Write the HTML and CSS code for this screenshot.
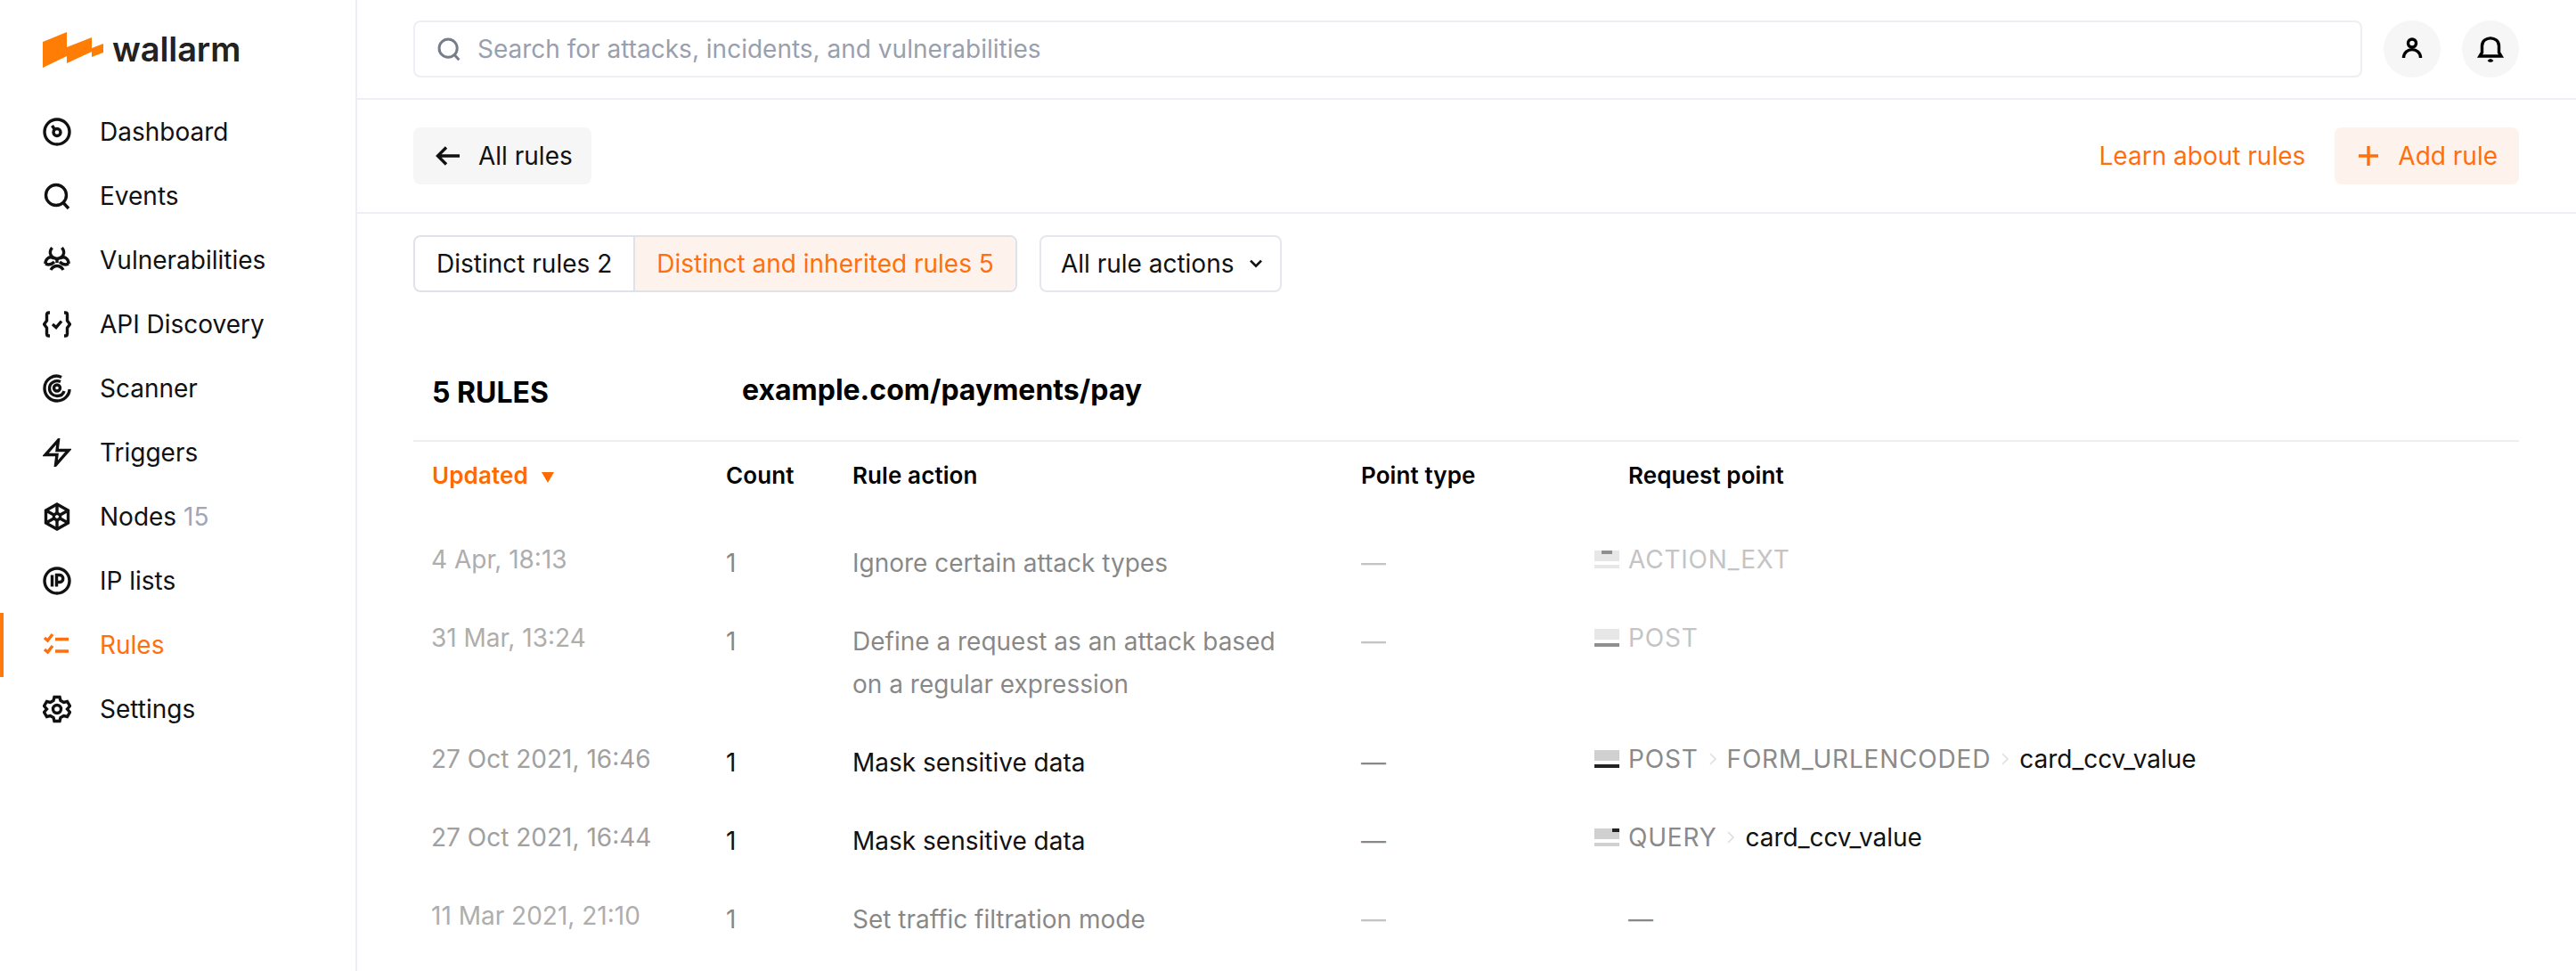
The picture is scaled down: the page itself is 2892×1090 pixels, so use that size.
FILE: index.html
```html
<!DOCTYPE html>
<html>
<head>
	<meta charset="utf-8">
	<title>Rules</title>
	<link rel="stylesheet" href="styles.css">
</head>
<body>
<div class="app">
	<aside class="sidebar">
		<div class="logo">
			<svg class="logo-mark" width="68" height="40" viewBox="0 0 68 40"><polygon fill="#ff7d05" points="0,11 27,0 27,17 55,6 55,18 68,13 68,23 55,28 55,22 27,35 27,27 0,40"/></svg>
			<span class="logo-text">wallarm</span>
		</div>
		<nav class="nav">
			<a class="nav-item">
				<svg class="ico" viewBox="0 0 32 32"><circle cx="16" cy="16" r="14"/><circle cx="16" cy="16.500" r="4"/><path d="M13.500 13.500 10.500 9"/></svg>
				<span>Dashboard</span>
			</a>
			<a class="nav-item">
				<svg class="ico" viewBox="0 0 32 32"><circle cx="15" cy="15" r="11.500"/><path d="M23 23.500 29 30"/></svg>
				<span>Events</span>
			</a>
			<a class="nav-item">
				<svg class="ico" viewBox="0 0 32 32"><path d="M10.500 2C6 8 9 13 16 14.500 23 13 26 8 21.500 2"/><path d="M3 20C3 14 8 11 12.500 14M3 20C7 22 10 21 13 18"/><path d="M29 20C29 14 24 11 19.500 14M29 20C25 22 22 21 19 18"/><path d="M9 27C11 23.500 14 22.500 16 22.500 18 22.500 21 23.500 23 27"/><path d="M16 14.500V19"/></svg>
				<span>Vulnerabilities</span>
			</a>
			<a class="nav-item">
				<svg class="ico" viewBox="0 0 32 32"><path d="M8 3H6.500C5 3 4.500 4 4.500 5.500V12L1.500 16 4.500 20V26.500C4.500 28 5 29 6.500 29H8"/><path d="M24 3H25.500C27 3 27.500 4 27.500 5.500V12L30.500 16 27.500 20V26.500C27.500 28 27 29 25.500 29H24"/><path d="M11 16 15 19.500 21 12.500"/></svg>
				<span>API Discovery</span>
			</a>
			<a class="nav-item">
				<svg class="ico" viewBox="0 0 32 32"><path d="M21 3.500C13 -0.500 2 5 2 16 2 24 8.500 30 16 30 23.500 30 30 24 30 17"/><path d="M20 8.500C14.500 6 7.500 9.500 7.500 16 7.500 21 11.500 24.500 16 24.500 20 24.500 23 22.500 24 19"/><circle cx="16" cy="15.500" r="3.500"/></svg>
				<span>Scanner</span>
			</a>
			<a class="nav-item">
				<svg class="ico" viewBox="0 0 32 32"><path d="M17.500 2 3 18.500H16L14.500 30 29 13.500H16Z"/></svg>
				<span>Triggers</span>
			</a>
			<a class="nav-item">
				<svg class="ico" viewBox="0 0 32 32"><path d="M16 2 28.500 9V23L16 30 3.500 23V9Z"/><path d="M16 2V12M16 20V30M3.500 9 12.500 14M28.500 9 19.500 14M3.500 23 12.500 18M28.500 23 19.500 18"/><path d="M16 12 19.500 14V18L16 20 12.500 18V14Z"/></svg>
				<span>Nodes <span class="nav-count">15</span></span>
			</a>
			<a class="nav-item">
				<svg class="ico" viewBox="0 0 32 32"><circle cx="16" cy="16" r="14"/><path d="M10.500 9.500V22.500"/><path d="M15.500 22.500V9.500H19C24 9.500 24 17.500 19 17.500H15.500"/></svg>
				<span>IP lists</span>
			</a>
			<a class="nav-item nav-active">
				<svg class="ico" viewBox="0 0 32 32"><path d="M2 8 5.500 11 11 4M2 21 5.500 24 11 17"/><path d="M14 9.500H29M14 23H29"/></svg>
				<span>Rules</span>
			</a>
			<a class="nav-item">
				<svg class="ico" viewBox="0 0 32 32"><path d="M13 2.500H19L20 6.500 23.500 8.500 27.500 7.500 30.500 12.500 27.500 16 30.500 19.500 27.500 24.500 23.500 23.500 20 25.500 19 29.500H13L12 25.500 8.500 23.500 4.500 24.500 1.500 19.500 4.500 16 1.500 12.500 4.500 7.500 8.500 8.500 12 6.500Z"/><circle cx="16" cy="16" r="4.500"/></svg>
				<span>Settings</span>
			</a>
		</nav>
	</aside>

	<main class="main">
		<header class="topbar">
			<div class="search">
				<svg class="search-ico" viewBox="0 0 32 32"><circle cx="15" cy="15" r="11.500"/><path d="M23 23.500 29 30"/></svg>
				<span>Search for attacks, incidents, and vulnerabilities</span>
			</div>
			<button class="round">
				<svg viewBox="0 0 32 32"><circle cx="16" cy="9.500" r="4.500"/><path d="M6.500 26C6.500 13.500 25.500 13.500 25.500 26"/></svg>
			</button>
			<button class="round">
				<svg viewBox="0 0 32 32"><path d="M4 24H28L25.500 20V12.500C25.500 1 6.500 1 6.500 12.500V20Z"/><path d="M14 28C15 29.500 17 29.500 18 28"/></svg>
			</button>
		</header>

		<div class="toolbar">
			<button class="btn btn-grey">
				<svg viewBox="0 0 32 32"><path d="M28 16H4M13 6.500 3.500 16 13 25.500"/></svg>
				All rules
			</button>
			<div class="toolbar-right">
				<a class="link">Learn about rules</a>
				<button class="btn btn-orange">
					<svg viewBox="0 0 32 32"><path d="M16 5V27M5 16H27"/></svg>
					Add rule
				</button>
			</div>
		</div>

		<div class="filters">
			<div class="tabs">
				<div class="tab">Distinct rules 2</div>
				<div class="tab tab-on">Distinct and inherited rules 5</div>
			</div>
			<div class="select">
				All rule actions
				<svg viewBox="0 0 12 12"><path d="M1.500 3.500 6 8 10.500 3.500"/></svg>
			</div>
		</div>

		<section class="rules">
			<div class="rules-head">
				<div class="rules-count">5 RULES</div>
				<div class="rules-path">example.com/payments/pay</div>
			</div>
			<div class="row row-head">
				<div class="th-sort">Updated <i class="sort-arrow"></i></div>
				<div>Count</div>
				<div>Rule action</div>
				<div>Point type</div>
				<div class="th-point">Request point</div>
			</div>

			<div class="row row-dim">
				<div class="date">4 Apr, 18:13</div>
				<div>1</div>
				<div>Ignore certain attack types</div>
				<div class="dash">—</div>
				<div class="point">
					<span class="pt pt-ext"><b></b></span>
					<span class="seg">ACTION_EXT</span>
				</div>
			</div>
			<div class="row row-dim">
				<div class="date">31 Mar, 13:24</div>
				<div>1</div>
				<div class="action-wrap">Define a request as an attack based on a regular expression</div>
				<div class="dash">—</div>
				<div class="point">
					<span class="pt pt-post"><b></b></span>
					<span class="seg">POST</span>
				</div>
			</div>
			<div class="row">
				<div class="date">27 Oct 2021, 16:46</div>
				<div>1</div>
				<div>Mask sensitive data</div>
				<div class="dash">—</div>
				<div class="point">
					<span class="pt pt-post"><b></b></span>
					<span class="seg">POST</span>
					<svg class="chev" viewBox="0 0 12 16"><path d="M3 2 9 8 3 14"/></svg>
					<span class="seg">FORM_URLENCODED</span>
					<svg class="chev" viewBox="0 0 12 16"><path d="M3 2 9 8 3 14"/></svg>
					<span>card_ccv_value</span>
				</div>
			</div>
			<div class="row">
				<div class="date">27 Oct 2021, 16:44</div>
				<div>1</div>
				<div>Mask sensitive data</div>
				<div class="dash">—</div>
				<div class="point">
					<span class="pt pt-query"><b></b></span>
					<span class="seg">QUERY</span>
					<svg class="chev" viewBox="0 0 12 16"><path d="M3 2 9 8 3 14"/></svg>
					<span>card_ccv_value</span>
				</div>
			</div>
			<div class="row row-dim">
				<div class="date">11 Mar 2021, 21:10</div>
				<div>1</div>
				<div>Set traffic filtration mode</div>
				<div class="dash">—</div>
				<div class="point-empty">—</div>
			</div>
		</section>
	</main>
</div>
</body>
</html>
```

FILE: styles.css
```css
html, body {
	margin: 0;
	height: 100%;
	overflow: hidden;
}
body {
	background: #fff;
	font-family: Inter, 'Liberation Sans', sans-serif;
	font-size: 28px;
	line-height: 48px;
	color: #111;
}
svg {
	fill: none;
	stroke: currentColor;
	stroke-width: 3.4;
}
button {
	font: inherit;
	border: 0;
	cursor: pointer;
}
.app {
	display: flex;
	height: 1090px;
}

/* sidebar */
.sidebar {
	width: 399px;
	flex: none;
	border-right: 2px solid #eeeef4;
}
.logo {
	display: flex;
	align-items: center;
	height: 112px;
	padding-left: 48px;
	gap: 10px;
}
.logo-mark {
	stroke: none;
}
.logo-text {
	font-weight: 600;
	font-size: 38px;
	letter-spacing: -0.1px;
	color: #222;
	line-height: 40px;
	padding-bottom: 2px;
}
.nav-item {
	display: flex;
	align-items: center;
	height: 72px;
	padding-left: 48px;
	gap: 32px;
	color: #111;
}
.ico {
	width: 32px;
	height: 32px;
	flex: none;
}
.nav-count {
	color: #a0a6b4;
}
.nav-active {
	color: #ff6f0d;
	box-shadow: inset 4px 0 0 #ff7a0a;
}

/* header bars */
.main {
	flex: 1;
	min-width: 0;
}
.topbar {
	display: flex;
	align-items: center;
	height: 110px;
	padding: 0 64px 0 63px;
	border-bottom: 2px solid #eeeef4;
}
.search {
	flex: 1;
	display: flex;
	align-items: center;
	gap: 18px;
	height: 60px;
	padding-left: 24px;
	border: 2px solid #eeeef4;
	border-radius: 8px;
	color: #9a9fae;
	margin-right: 24px;
}
.search-ico {
	width: 28px;
	height: 28px;
	color: #777c88;
}
.round {
	width: 64px;
	height: 64px;
	border-radius: 50%;
	background: #f6f6f6;
	padding: 16px;
	display: flex;
	color: #000;
}
.round + .round {
	margin-left: 24px;
}
.round svg {
	width: 32px;
	height: 32px;
}
.toolbar {
	display: flex;
	align-items: center;
	justify-content: space-between;
	height: 126px;
	padding: 0 64px 0 63px;
	border-bottom: 2px solid #eeeef4;
}
.toolbar-right {
	display: flex;
	align-items: center;
	gap: 33px;
}
.btn {
	display: flex;
	align-items: center;
	height: 64px;
	border-radius: 8px;
	gap: 17px;
}
.btn svg {
	width: 32px;
	height: 32px;
}
.btn-grey {
	background: #f6f6f6;
	color: #111;
	padding: 0 21px 0 24px;
}
.btn-orange {
	background: #fef3ec;
	color: #ff6f0d;
	padding: 0 24px 0 22px;
}
.link {
	color: #ff6f0d;
}

/* filters */
.filters {
	display: flex;
	padding: 24px 0 0 63px;
	gap: 25px;
}
.tabs {
	display: flex;
	height: 64px;
	border: 2px solid #e0e2ea;
	border-radius: 8px;
	overflow: hidden;
	box-sizing: border-box;
}
.tab {
	padding: 0 24px;
	line-height: 60px;
}
.tab-on {
	background: #fef3ec;
	color: #ff6f0d;
	border-left: 2px solid #e0e2ea;
}
.select {
	display: flex;
	align-items: center;
	gap: 17px;
	height: 64px;
	box-sizing: border-box;
	padding: 0 19px 0 22px;
	border: 2px solid #e6e7ee;
	border-radius: 8px;
}
.select svg {
	width: 16px;
	height: 16px;
	stroke-width: 2;
}

/* rules table */
.rules {
	margin: 0 64px 0 63px;
}
.rules-head {
	display: flex;
	height: 76px;
	padding: 90px 0 0 21px;
	align-items: flex-start;
	border-bottom: 2px solid #eeeeee;
	font-weight: 700;
	font-size: 32px;
	line-height: 40px;
	color: #000;
}
.rules-count {
	width: 348px;
	padding-top: 3px;
}
.row {
	display: grid;
	grid-template-columns: 330px 142px 571px 262px 1fr;
	padding: 20px 0 20px 21px;
}
.date {
	color: #a0a0a0;
	margin: -4px 0 0 -1px;
}
.row-head {
	font-weight: 600;
	font-size: 26px;
	letter-spacing: 0.1px;
	color: #000;
	padding-top: 14px;
	padding-bottom: 30px;
}
.th-sort {
	color: #ff6a00;
}
.sort-arrow {
	display: inline-block;
	margin-left: 9px;
	border: 7px solid transparent;
	border-top: 12px solid #ff6a00;
	border-bottom: 0;
	vertical-align: middle;
}
.th-point {
	padding-left: 38px;
}
.dash {
	color: #888;
}
.row-dim > div:not(.date, .point-empty) {
	opacity: 0.5;
}
.row-dim .date {
	opacity: 0.85;
}
.action-wrap {
	width: 480px;
}
.point {
	display: flex;
	align-items: center;
	height: 48px;
	margin-top: -4px;
	white-space: nowrap;
}
.point-empty {
	padding-left: 38px;
	color: #888;
}
.seg {
	color: #8a8a8a;
	letter-spacing: 0.8px;
}
.chev {
	width: 12px;
	height: 16px;
	margin: 0 10px;
	stroke: #ddd;
	stroke-width: 1.5;
}
.pt {
	position: relative;
	width: 28px;
	height: 20px;
	margin-right: 10px;
	background: linear-gradient(#d0d0d0 0 12px, transparent 12px 16px, #d0d0d0 16px);
}
.pt b {
	position: absolute;
	background: #222;
}
.pt-post b {
	left: 0;
	right: 0;
	bottom: 0;
	height: 4px;
}
.pt-query b {
	right: 0;
	top: 0;
	width: 8px;
	height: 4px;
}
.pt-ext b {
	left: 8px;
	top: 0;
	width: 12px;
	height: 4px;
}
```
